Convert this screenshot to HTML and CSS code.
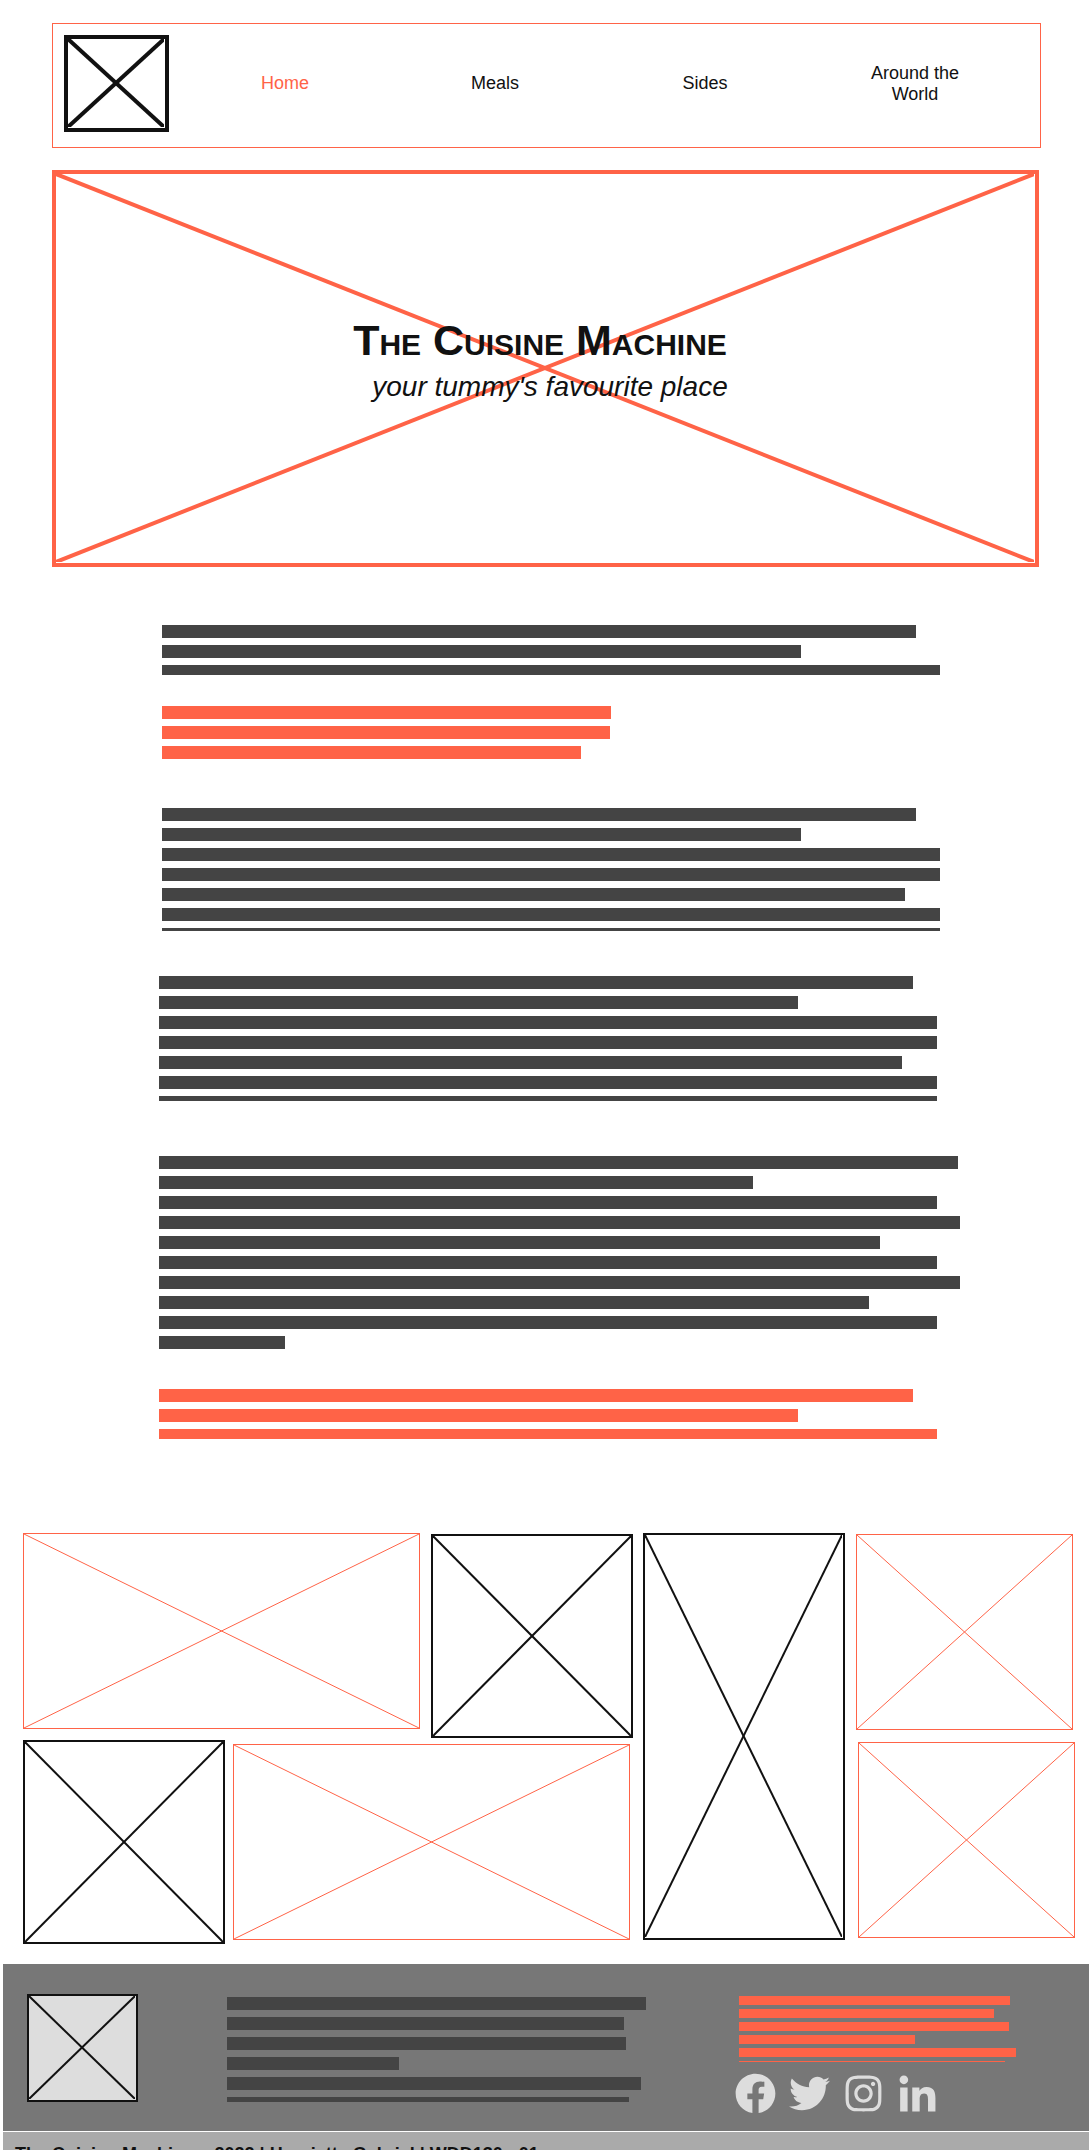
FILE: index.html
```html
<!DOCTYPE html>
<html lang="en">
<head>
<meta charset="utf-8">
<meta name="viewport" content="width=device-width, initial-scale=1">
<title>The Cuisine Machine</title>
<link rel="stylesheet" href="styles.css">
</head>
<body>
<header class="site-header">
  <div class="frame frame-heavy frame-inset logo">
    <svg class="cross" aria-hidden="true"><line x1="0" y1="0" x2="100%" y2="100%"/><line x1="100%" y1="0" x2="0" y2="100%"/></svg>
  </div>
  <nav class="nav">
    <a class="active" href="#home">Home</a>
    <a href="#meals">Meals</a>
    <a href="#sides">Sides</a>
    <a href="#world">Around the World</a>
  </nav>
</header>

<main>
  <section class="hero frame frame-heavy frame-inset accent">
    <svg class="cross" aria-hidden="true"><line x1="0" y1="0" x2="100%" y2="100%"/><line x1="100%" y1="0" x2="0" y2="100%"/></svg>
    <div class="hero-text">
      <h1>The Cuisine Machine</h1>
      <p>your tummy's favourite place</p>
    </div>
  </section>

  <section class="story">
    <div class="story-lead">
      <div class="lines trim-10">
        <span style="width:754px"></span><span style="width:639px"></span><span style="width:778px"></span>
      </div>
      <div class="lines accent-lines">
        <span style="width:449px"></span><span style="width:448px"></span><span style="width:419px"></span>
      </div>
      <div class="lines trim-3">
        <span style="width:754px"></span><span style="width:639px"></span><span style="width:778px"></span><span style="width:778px"></span><span style="width:743px"></span><span style="width:778px"></span><span style="width:778px"></span>
      </div>
    </div>
    <div class="story-body">
      <div class="lines trim-5">
        <span style="width:754px"></span><span style="width:639px"></span><span style="width:778px"></span><span style="width:778px"></span><span style="width:743px"></span><span style="width:778px"></span><span style="width:778px"></span>
      </div>
      <div class="lines">
        <span style="width:799px"></span><span style="width:594px"></span><span style="width:778px"></span><span style="width:801px"></span><span style="width:721px"></span><span style="width:778px"></span><span style="width:801px"></span><span style="width:710px"></span><span style="width:778px"></span><span style="width:126px"></span>
      </div>
      <div class="lines accent-lines trim-10">
        <span style="width:754px"></span><span style="width:639px"></span><span style="width:778px"></span>
      </div>
    </div>
  </section>

  <section class="gallery">
    <div class="gallery-main">
      <div class="gallery-row">
        <div class="frame accent wide"><svg class="cross" aria-hidden="true"><line x1="0" y1="0" x2="100%" y2="100%"/><line x1="100%" y1="0" x2="0" y2="100%"/></svg></div>
        <div class="frame frame-medium square"><svg class="cross" aria-hidden="true"><line x1="0" y1="0" x2="100%" y2="100%"/><line x1="100%" y1="0" x2="0" y2="100%"/></svg></div>
      </div>
      <div class="gallery-row gallery-row-reversed">
        <div class="frame frame-medium square"><svg class="cross" aria-hidden="true"><line x1="0" y1="0" x2="100%" y2="100%"/><line x1="100%" y1="0" x2="0" y2="100%"/></svg></div>
        <div class="frame accent wide"><svg class="cross" aria-hidden="true"><line x1="0" y1="0" x2="100%" y2="100%"/><line x1="100%" y1="0" x2="0" y2="100%"/></svg></div>
      </div>
    </div>
    <div class="frame frame-medium frame-inset tall"><svg class="cross" aria-hidden="true"><line x1="0" y1="0" x2="100%" y2="100%"/><line x1="100%" y1="0" x2="0" y2="100%"/></svg></div>
    <div class="gallery-side">
      <div class="frame accent small"><svg class="cross" aria-hidden="true"><line x1="0" y1="0" x2="100%" y2="100%"/><line x1="100%" y1="0" x2="0" y2="100%"/></svg></div>
      <div class="frame accent small small-end"><svg class="cross" aria-hidden="true"><line x1="0" y1="0" x2="100%" y2="100%"/><line x1="100%" y1="0" x2="0" y2="100%"/></svg></div>
    </div>
  </section>
</main>

<footer class="site-footer">
  <div class="footer-top">
    <div class="frame frame-medium frame-inset footer-logo"><svg class="cross" aria-hidden="true"><line x1="0" y1="0" x2="100%" y2="100%"/><line x1="100%" y1="0" x2="0" y2="100%"/></svg></div>
    <div class="footer-about">
      <div class="lines trim-5">
        <span style="width:419px"></span><span style="width:397px"></span><span style="width:399px"></span><span style="width:172px"></span><span style="width:414px"></span><span style="width:402px"></span>
      </div>
    </div>
    <div class="footer-contact">
      <div class="lines lines-small accent-lines trim-1">
        <span style="width:271px"></span><span style="width:255px"></span><span style="width:270px"></span><span style="width:176px"></span><span style="width:277px"></span><span style="width:266px"></span>
      </div>
      <div class="social">
        <a href="#facebook" aria-label="Facebook"><svg viewBox="0 0 512 512"><path d="M504 256C504 119 393 8 256 8S8 119 8 256c0 123.78 90.69 226.38 209.25 245V327.69h-63V256h63v-54.64c0-62.15 37-96.48 93.67-96.48 27.14 0 55.52 4.84 55.52 4.84v61h-31.28c-30.8 0-40.41 19.12-40.41 38.73V256h68.78l-11 71.69h-57.78V501C413.31 482.38 504 379.78 504 256z"/></svg></a>
        <a href="#twitter" aria-label="Twitter"><svg viewBox="0 0 512 512"><path d="M459.37 151.716c.325 4.548.325 9.097.325 13.645 0 138.72-105.583 298.558-298.558 298.558-59.452 0-114.68-17.219-161.137-47.106 8.447.974 16.568 1.299 25.34 1.299 49.055 0 94.213-16.568 130.274-44.832-46.132-.975-84.792-31.188-98.112-72.772 6.498.974 12.995 1.624 19.818 1.624 9.421 0 18.843-1.3 27.614-3.573-48.081-9.747-84.143-51.98-84.143-102.985v-1.299c13.969 7.797 30.214 12.67 47.431 13.319-28.264-18.843-46.781-51.005-46.781-87.391 0-19.492 5.197-37.36 14.294-52.954 51.655 63.675 129.3 105.258 216.365 109.807-1.624-7.797-2.599-15.918-2.599-24.04 0-57.828 46.782-104.934 104.934-104.934 30.213 0 57.502 12.67 76.67 33.137 23.715-4.548 46.456-13.32 66.599-25.34-7.798 24.366-24.366 44.833-46.132 57.827 21.117-2.273 41.584-8.122 60.426-16.243-14.292 20.791-32.161 39.308-52.628 54.253z"/></svg></a>
        <a href="#instagram" aria-label="Instagram"><svg viewBox="-32 0 512 512"><path d="M224.1 141c-63.6 0-114.9 51.3-114.9 114.9s51.3 114.9 114.9 114.9S339 319.5 339 255.9 287.7 141 224.1 141zm0 189.6c-41.1 0-74.7-33.5-74.7-74.7s33.5-74.7 74.7-74.7 74.7 33.5 74.7 74.7-33.6 74.7-74.7 74.7zm146.4-194.3c0 14.9-12 26.8-26.8 26.8-14.9 0-26.8-12-26.8-26.8s12-26.8 26.8-26.8 26.8 12 26.8 26.8zm76.1 27.2c-1.7-35.9-9.9-67.7-36.2-93.9-26.2-26.2-58-34.4-93.9-36.2-37-2.1-147.9-2.1-184.9 0-35.8 1.7-67.6 9.9-93.9 36.1s-34.4 58-36.2 93.9c-2.1 37-2.1 147.9 0 184.9 1.7 35.9 9.9 67.7 36.2 93.9s58 34.4 93.9 36.2c37 2.1 147.9 2.1 184.9 0 35.9-1.7 67.7-9.9 93.9-36.2 26.2-26.2 34.4-58 36.2-93.9 2.1-37 2.1-147.8 0-184.8zM398.8 388c-7.8 19.6-22.9 34.7-42.6 42.6-29.5 11.7-99.5 9-132.1 9s-102.7 2.6-132.1-9c-19.6-7.8-34.7-22.9-42.6-42.6-11.7-29.5-9-99.5-9-132.1s-2.6-102.7 9-132.1c7.8-19.6 22.9-34.7 42.6-42.6 29.5-11.7 99.5-9 132.1-9s102.7-2.6 132.1 9c19.6 7.8 34.7 22.9 42.6 42.6 11.7 29.5 9 99.5 9 132.1s2.7 102.7-9 132.1z"/></svg></a>
        <a href="#linkedin" aria-label="LinkedIn"><svg viewBox="-32 -32 512 512"><path d="M100.28 448H7.4V148.9h92.88zM53.79 108.1C24.09 108.1 0 83.5 0 53.8a53.79 53.79 0 0 1 107.58 0c0 29.7-24.1 54.3-53.79 54.3zM447.9 448h-92.68V302.4c0-34.7-.7-79.2-48.29-79.2-48.29 0-55.69 37.7-55.69 76.7V448h-92.78V148.9h89.08v40.8h1.3c12.4-23.5 42.69-48.3 87.88-48.3 94 0 111.28 61.9 111.28 142.3V448z"/></svg></a>
      </div>
    </div>
  </div>
  <p class="footer-bottom">The Cuisine Machine ~ 2022 | Henrietta Gabriel | WDD130 - 01</p>
</footer>
</body>
</html>
```

FILE: styles.css
```css
* {
  box-sizing: border-box;
}

body {
  margin: 0;
  background: #fff;
  color: #111;
  font-family: "Liberation Sans", Arial, sans-serif;
  font-size: 18px;
  line-height: 21px;
}

h1,
p {
  margin: 0;
}

/* Placeholder picture: a bordered box crossed by its diagonals */
.frame {
  display: flex;
  border: 1px solid #111;
  stroke: #111;
  stroke-width: 1px;
}

.frame-medium {
  border-width: 2px;
  stroke-width: 2px;
}

.frame-heavy {
  border-width: 4px;
  stroke-width: 4px;
}

.frame-inset {
  padding: 0 1px 1px 0;
}

.accent {
  border-color: #ff6347;
  stroke: #ff6347;
}

.cross {
  display: block;
  width: 100%;
  height: 100%;
}

/* Placeholder text: one bar for each line */
.lines {
  display: flex;
  flex-direction: column;
  gap: 7px;
}

.lines span {
  height: 13px;
  max-width: 100%;
  background: #444;
}

.lines-small {
  gap: 4px;
}

.lines-small span {
  height: 9px;
}

.accent-lines span {
  background: #ff6347;
}

.trim-10 span:last-child {
  height: 10px;
}

.trim-5 span:last-child {
  height: 5px;
}

.trim-3 span:last-child {
  height: 3px;
}

.trim-1 span:last-child {
  height: 1px;
}

/* Header */
.site-header {
  display: flex;
  align-items: center;
  margin: 23px 49px 0 52px;
  padding: 11px 20px 15px 11px;
  border: 1px solid #ff6347;
}

.logo {
  flex: none;
  width: 105px;
  height: 97px;
}

.nav {
  flex: 1;
  display: grid;
  grid-template-columns: repeat(4, 1fr);
  align-items: center;
  margin-left: 11px;
}

.nav a {
  padding: 0 50px;
  color: #111;
  text-align: center;
  text-decoration: none;
}

.nav .active {
  color: #ff6347;
}

/* Hero */
.hero {
  display: grid;
  height: 397px;
  margin: 22px 51px 0 52px;
}

.hero > * {
  grid-area: 1 / 1;
}

.hero-text {
  align-self: center;
  padding-bottom: 10px;
  text-align: center;
}

.hero-text h1 {
  padding-right: 10px;
  font-size: 43px;
  font-variant: small-caps;
  line-height: 48px;
}

.hero-text p {
  padding-left: 10px;
  font-size: 28px;
  font-style: italic;
  line-height: 46px;
}

/* Story */
.story {
  padding: 58px 130px 0 159px;
}

.story-lead {
  padding-left: 3px;
}

.lines + .accent-lines {
  margin-top: 31px;
}

.accent-lines + .lines {
  margin-top: 49px;
}

.story-body {
  margin-top: 45px;
}

.story-body .lines + .lines {
  margin-top: 55px;
}

.story-body .lines + .accent-lines {
  margin-top: 40px;
}

/* Gallery */
.gallery {
  display: grid;
  grid-template-columns: 610fr 202fr 220fr;
  align-items: start;
  column-gap: 10px;
  padding: 94px 15px 20px 23px;
}

.gallery-main {
  display: grid;
  gap: 2px;
}

.gallery-row {
  display: grid;
  grid-template-columns: 397fr 202fr;
  column-gap: 11px;
  height: 205px;
}

.gallery-row .square {
  align-self: end;
}

.gallery-row-reversed {
  grid-template-columns: 202fr 397fr;
  column-gap: 8px;
  height: 204px;
  padding-right: 3px;
}

.gallery-row-reversed .wide {
  align-self: center;
}

.wide {
  height: 196px;
}

.square {
  height: 204px;
}

.tall {
  height: 407px;
}

.gallery-side {
  display: grid;
  gap: 12px;
  padding: 1px 0 0 1px;
}

.small {
  height: 196px;
  margin-right: 2px;
}

.small-end {
  margin-right: 0;
  margin-left: 2px;
}

/* Footer */
.site-footer {
  margin: 0 1px 0 3px;
}

.footer-top {
  display: grid;
  grid-template-columns: 200px 512px 1fr;
  padding: 30px 24px 17px;
  background: #777;
}

.footer-logo {
  width: 111px;
  height: 108px;
  background: #ddd;
}

.footer-about {
  padding-top: 3px;
}

.footer-contact {
  padding-top: 2px;
}

.social {
  display: flex;
  gap: 13px;
  margin: 11px 0 0 -4px;
}

.social svg {
  display: block;
  width: 41px;
  height: 41px;
  fill: #ddd;
}

.footer-bottom {
  margin-top: 1px;
  padding: 12px;
  background: #aaa;
  font-weight: bold;
}
```
